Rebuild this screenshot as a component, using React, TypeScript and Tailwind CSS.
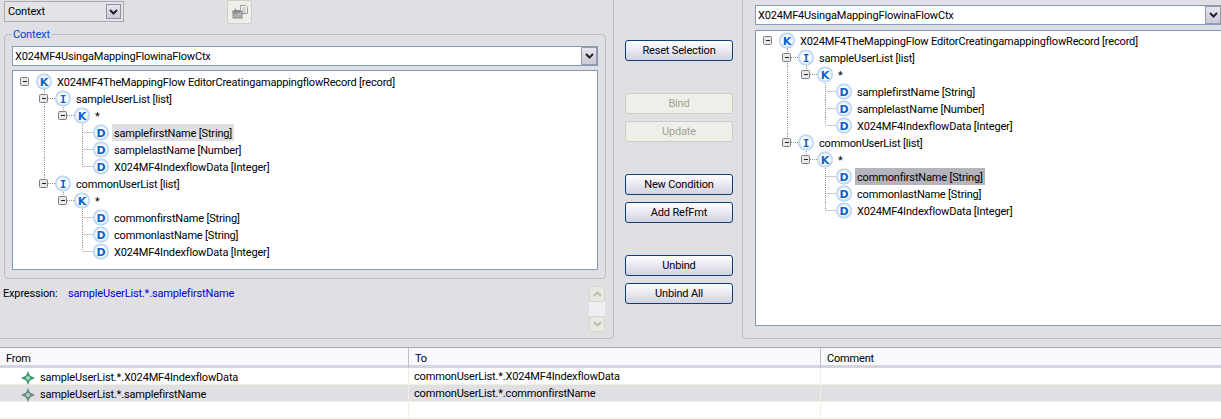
import React from "react";

type RowT = { depth: number; letter: string; label: string; box?: boolean; sel?: "light" | "dark"; guides: [number, number, number][]; elbow?: boolean };

const rows = (a: string, sel1?: "light", sel2?: "dark"): RowT[] => [
  { depth: 0, letter: "K", box: true, label: a, guides: [[44, 10, 17]] },
  { depth: 1, letter: "I", box: true, label: "sampleUserList [list]", guides: [[44, 0, 17], [63, 11, 17]] },
  { depth: 2, letter: "K", box: true, label: "*", guides: [[44, 0, 17], [63, 0, 4], [82, 11, 17]] },
  { depth: 3, letter: "D", elbow: true, sel: sel1, label: "samplefirstName [String]", guides: [[44, 0, 17], [82, 0, 17]] },
  { depth: 3, letter: "D", elbow: true, label: "samplelastName [Number]", guides: [[44, 0, 17], [82, 0, 17]] },
  { depth: 3, letter: "D", elbow: true, label: "X024MF4IndexflowData [Integer]", guides: [[44, 0, 17], [82, 0, 8]] },
  { depth: 1, letter: "I", box: true, label: "commonUserList [list]", guides: [[44, 0, 4], [63, 11, 17]] },
  { depth: 2, letter: "K", box: true, label: "*", guides: [[63, 0, 4], [82, 11, 17]] },
  { depth: 3, letter: "D", elbow: true, sel: sel2, label: "commonfirstName [String]", guides: [[82, 0, 17]] },
  { depth: 3, letter: "D", elbow: true, label: "commonlastName [String]", guides: [[82, 0, 17]] },
  { depth: 3, letter: "D", elbow: true, label: "X024MF4IndexflowData [Integer]", guides: [[82, 0, 8]] },
];

function Node({ r }: { r: RowT }) {
  const boxX = 12 + 19 * r.depth;
  const iconX = 31 + 19 * r.depth;
  const w = 43 + 19 * r.depth;
  return (
    <svg width={w} height={17} className="shrink-0 block">
      <defs>
        <radialGradient id="glow">
          <stop offset="0.6" stopColor="#ffffff" />
          <stop offset="0.8" stopColor="#d3e4f8" />
          <stop offset="1" stopColor="#a9c9ee" />
        </radialGradient>
      </defs>
      {r.guides.map(([x, y1, y2], i) => (
        <line key={i} x1={x - 13 + 0.5} x2={x - 13 + 0.5} y1={y1} y2={y2} stroke="#9a9a8c" strokeDasharray="1 1" />
      ))}
      {r.box && r.depth > 0 && <line x1={boxX + 4} x2={iconX - 6} y1={8.5} y2={8.5} stroke="#9a9a8c" strokeDasharray="1 1" />}
      {r.elbow && <line x1={69.5} x2={iconX - 6} y1={8.5} y2={8.5} stroke="#9a9a8c" strokeDasharray="1 1" />}
      {r.box && (
        <g>
          <rect x={boxX - 4.5} y={4.5} width={8} height={8} fill="#e8e8ea" stroke="#7d7d86" rx={1} />
          <line x1={boxX - 2} x2={boxX + 2} y1={8.5} y2={8.5} stroke="#222" />
        </g>
      )}
      <circle cx={iconX} cy={8.5} r={8} fill="url(#glow)" />
      <text x={iconX} y={12.5} textAnchor="middle" fontSize={11} fontWeight={700} fill="#0a62c8" fontFamily={r.letter === "I" ? "'DejaVu Sans Mono', monospace" : "'DejaVu Sans', sans-serif"}>
        {r.letter}
      </text>
    </svg>
  );
}

function Tree({ label, sel1, sel2, className }: { label: string; sel1?: "light"; sel2?: "dark"; className: string }) {
  return (
    <div className={`bg-white border border-[#7f9db9] ${className}`}>
      {rows(label, sel1, sel2).map((r, i) => (
        <div key={i} className="flex items-center h-[17px]">
          <Node r={r} />
          <span
            className={`-ml-[1px] px-[2px] h-[17px] leading-[19px] whitespace-pre ${
              r.sel === "light" ? "bg-[#dfdfe3]" : r.sel === "dark" ? "bg-[#b4b4bc]" : ""
            }`}
          >
            {r.label}
          </span>
        </div>
      ))}
    </div>
  );
}

function Chevron() {
  return (
    <svg width="9" height="6" viewBox="0 0 9 6">
      <path d="M1 1l3.5 3.5L8 1" fill="none" stroke="#222" strokeWidth="2" />
    </svg>
  );
}

function Combo({ text, className }: { text: string; className: string }) {
  return (
    <div className={`flex items-center h-[20px] bg-white border border-[#7f9db9] ${className}`}>
      <span className="flex-1 pl-[2px] whitespace-pre pt-[2px]">{text}</span>
      <span className="flex items-center justify-center w-[16px] h-[18px] bg-gradient-to-b from-[#e6e6ee] to-[#c9c9d8] border border-[#9a9aa8]">
        <Chevron />
      </span>
    </div>
  );
}

function Btn({ children, disabled, className = "" }: { children: React.ReactNode; disabled?: boolean; className?: string }) {
  return (
    <div
      className={`w-[108px] h-[21px] shrink-0 rounded-[3px] flex items-center justify-center border pt-[2px] ${
        disabled
          ? "border-[#cdcdc4] bg-[#efefe9] text-[#a1a193]"
          : "border-[#0f3f78] bg-gradient-to-b from-[#ffffff] to-[#d2d2e2] text-black"
      } ${className}`}
    >
      {children}
    </div>
  );
}

function Star({ color }: { color: string }) {
  return (
    <svg width="14" height="14" viewBox="0 0 14 14" className="shrink-0">
      <path d="M7 0L9 4.5L14 7L9 9.5L7 14L5 9.5L0 7L5 4.5Z" fill={color} />
      <circle cx="7" cy="7" r="2" fill="#a8d4c0" />
    </svg>
  );
}

export default function App() {
  return (
    <div
      className="w-[1221px] h-[419px] overflow-hidden bg-[#dfdfe4] text-black text-[11px] tracking-[-0.17px] flex flex-col"
      style={{ fontFamily: "Roboto, sans-serif" }}
    >
      <div className="flex h-[347px] shrink-0">
        <div className="w-[614px] h-[339px] border-r border-b border-[#bdbcc2] rounded-br-[4px] flex flex-col">
          <div className="flex items-start pl-[4px] h-[26px]">
            <div className="w-[120px] mt-[1px] h-[21px] flex items-center border border-[#a9a9b0] bg-[#e4e4e8]">
              <span className="flex-1 pl-[3px] pt-[1px]">Context</span>
              <span className="flex items-center justify-center w-[15px] h-[15px] bg-gradient-to-b from-[#e6e6ee] to-[#c9c9d8] border border-[#8f8f9f] mr-[2px]">
                <Chevron />
              </span>
            </div>
            <div className="ml-[103px] w-[25px] h-[24px] rounded-[2px] border border-[#cfcfc6] bg-[#efefe9] flex items-center justify-center">
              <svg width="18" height="16" viewBox="0 0 18 16">
                <path d="M9.5 1.5h5l2 2v6h-7z" fill="#fff" stroke="#9a9a9a" />
                <path d="M11 4h4M11 6h4M11 8h4" stroke="#aaa" />
                <rect x="2" y="7" width="9" height="7" fill="#b0b0b0" stroke="#8a8a8a" />
                <path d="M1 8l4-4v2h4v3H5v2z" fill="#8f8f8f" />
              </svg>
            </div>
          </div>
          <fieldset className="ml-[4px] mt-[1px] w-[602px] h-[252px] border border-[#bdbcc2] rounded-[4px] px-[7px] pt-[5px]">
            <legend className="ml-[0px] px-[1px] text-[#0046d5] leading-[13px] pt-[1px]">Context</legend>
            <Combo text="X024MF4UsingaMappingFlowinaFlowCtx" className="w-[586px]" />
            <Tree
              label="X024MF4TheMappingFlow EditorCreatingamappingflowRecord [record]"
              sel1="light"
              className="w-[586px] h-[200px] mt-[4px] pt-[2px]"
            />
          </fieldset>
          <div className="flex flex-1 pl-[3px] pr-[8px] pt-[7px]">
            <span className="leading-[16px] w-[65px]">Expression:</span>
            <span className="leading-[16px] text-[#0000e0]">sampleUserList.*.samplefirstName</span>
            <div className="ml-auto w-[16px] h-[46px] bg-[#eeeef4] flex flex-col justify-between">
              {[0, 1].map((i) => (
                <span key={i} className="w-[16px] h-[16px] rounded-[2px] bg-[#e9e9e1] border border-[#d5d5cb] flex items-center justify-center">
                  <svg width="9" height="6" viewBox="0 0 9 6" className={i === 0 ? "rotate-180" : ""}>
                    <path d="M1 1l3.5 3.5L8 1" fill="none" stroke="#bdbdb2" strokeWidth="2" />
                  </svg>
                </span>
              ))}
            </div>
          </div>
        </div>

        <div className="w-[128px] pl-[11px] pt-[40px] flex flex-col gap-[7px]">
          <Btn>Reset Selection</Btn>
          <Btn disabled className="mt-[25px]">Bind</Btn>
          <Btn disabled>Update</Btn>
          <Btn className="mt-[25px]">New Condition</Btn>
          <Btn>Add RefFmt</Btn>
          <Btn className="mt-[25px]">Unbind</Btn>
          <Btn>Unbind All</Btn>
        </div>

        <div className="flex-1 h-[339px] border-l border-b border-[#bdbcc2] rounded-bl-[4px] pl-[12px] pt-[5px]">
          <Combo text="X024MF4UsingaMappingFlowinaFlowCtx" className="w-[466px] border-r-0" />
          <Tree
            label="X024MF4TheMappingFlow EditorCreatingamappingflowRecord [record]"
            sel2="dark"
            className="w-[466px] h-[296px] mt-[5px] pt-[1px] border-r-0"
          />
        </div>
      </div>

      <div className="flex-1 bg-white border-t border-[#a8a8b4]">
        <div className="grid grid-cols-[409px_412px_400px] h-[17px] bg-[#f8f8fd] border-b-[3px] border-[#d5d5e2] box-content">
          {["From", "To", "Comment"].map((h, i) => (
            <div key={h} className={`pl-[6px] leading-[21px] ${i > 0 ? "border-l border-[#c0c0c8] -ml-[1px]" : ""}`}>
              {h}
            </div>
          ))}
        </div>
        {[
          { a: "sampleUserList.*.X024MF4IndexflowData", b: "commonUserList.*.X024MF4IndexflowData", c: "#3f9f72", bg: "bg-white" },
          { a: "sampleUserList.*.samplefirstName", b: "commonUserList.*.commonfirstName", c: "#6f8a7c", bg: "bg-[#dfdfe4]" },
          { a: "", b: "", c: "", bg: "bg-white" },
        ].map((r, i) => (
          <div key={i} className={`grid grid-cols-[409px_412px_400px] h-[17px] border-b border-[#efefe2] ${r.bg}`}>
            <div className="flex items-center pl-[21px] gap-[5px] border-r border-[#efefe2] pt-[1px]">
              {r.a && <Star color={r.c} />}
              <span className="leading-[16px] pt-[1px]">{r.a}</span>
            </div>
            <div className="pl-[5px] leading-[18px] border-r border-[#efefe2]">{r.b}</div>
            <div />
          </div>
        ))}
      </div>
    </div>
  );
}
